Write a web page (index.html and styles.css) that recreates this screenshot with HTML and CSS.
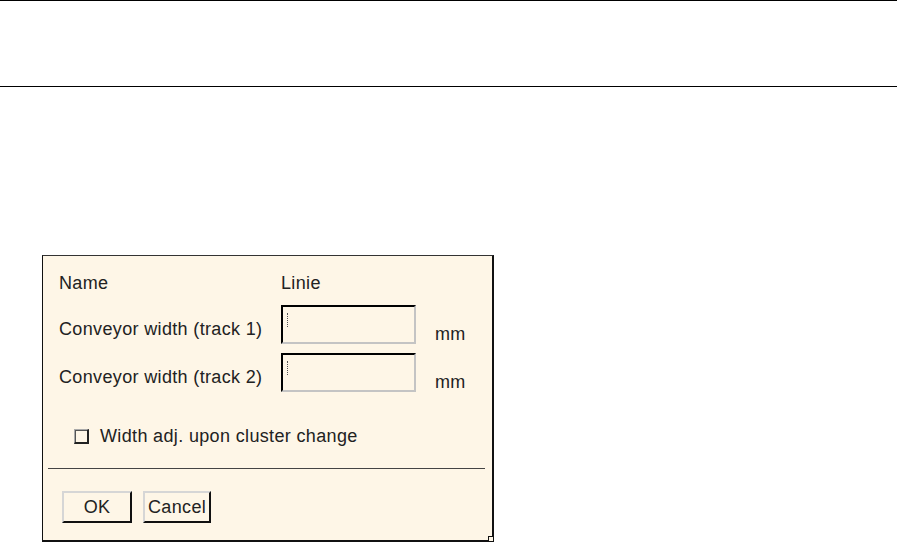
FILE: index.html
```html
<!DOCTYPE html>
<html lang="en">
<head>
    <meta charset="UTF-8">
    <title>Linie</title>
    <link rel="stylesheet" href="styles.css">
</head>
<body>

    <div class="toolbar"></div>

    <div class="dialog">
        <div class="form-grid">
            <div class="label name-label">Name</div>
            <div class="value">Linie</div>
            <div></div>

            <div class="label">Conveyor width (track 1)</div>
            <div class="field"><span class="caret"></span></div>
            <div class="unit">mm</div>

            <div class="label">Conveyor width (track 2)</div>
            <div class="field"><span class="caret"></span></div>
            <div class="unit">mm</div>
        </div>

        <label class="check-row">
            <span class="checkbox"></span>
            Width adj. upon cluster change
        </label>

        <div class="separator"></div>

        <div class="buttons">
            <button class="btn btn-ok">OK</button>
            <button class="btn">Cancel</button>
        </div>

        <span class="grip"></span>
    </div>

</body>
</html>
```

FILE: styles.css
```css
body {
    margin: 0;
    background: #ffffff;
    font-family: "Liberation Sans", Arial, sans-serif;
    font-size: 18px;
    letter-spacing: 0.35px;
    color: #222;
}

.toolbar {
    height: 85px;
    border-top: 1px solid #000;
    border-bottom: 1px solid #000;
}

.dialog {
    position: relative;
    box-sizing: border-box;
    width: 452px;
    margin: 168px 0 0 42px;
    background: #fef6e7;
    border-top: 1px solid #333;
    border-left: 1px solid #111;
    border-right: 2px solid #111;
    border-bottom: 2px solid #111;
    padding: 17px 0 17px 0;
}

.form-grid {
    display: grid;
    grid-template-columns: 222px 135px auto;
    padding-left: 16px;
    align-items: end;
}

.label, .value, .unit {
    line-height: 20px;
    white-space: nowrap;
}

.name-label, .value {
    margin-bottom: 12px;
}

.form-grid .label:not(.name-label) {
    margin-bottom: 14px;
}

.unit {
    margin: 0 0 9px 19px;
}

.field {
    box-sizing: border-box;
    height: 39px;
    margin-bottom: 9px;
    border-top: 2px solid #000;
    border-left: 2px solid #000;
    border-right: 2px solid #c4c4c4;
    border-bottom: 2px solid #c4c4c4;
    padding: 6px 0 0 4px;
}

.caret {
    display: block;
    width: 0;
    height: 14px;
    border-left: 1px dotted #555;
}

.check-row {
    display: flex;
    align-items: center;
    gap: 11px;
    margin: 25px 0 0 31px;
    line-height: 20px;
}

.checkbox {
    box-sizing: border-box;
    width: 15px;
    height: 15px;
    border-top: 1px solid #aaa;
    border-left: 1px solid #aaa;
    border-right: 2px solid #222;
    border-bottom: 2px solid #222;
    box-shadow: inset 1px 1px 0 #555;
}

.separator {
    height: 1px;
    background: #444;
    margin: 22px 7px 0 5px;
}

.buttons {
    display: flex;
    gap: 11px;
    margin: 22px 0 0 19px;
}

.btn {
    box-sizing: border-box;
    height: 32px;
    padding: 0 3px;
    background: #fef6e7;
    font-family: inherit;
    font-size: 18px;
    letter-spacing: 0.35px;
    color: #222;
    border-top: 2px solid #d6d6d6;
    border-left: 2px solid #d6d6d6;
    border-right: 2px solid #111;
    border-bottom: 2px solid #111;
}

.btn-ok {
    width: 70px;
}

.grip {
    position: absolute;
    right: -2px;
    bottom: -2px;
    width: 4px;
    height: 4px;
    border: 1px solid #111;
    background: #fef6e7;
}
```
